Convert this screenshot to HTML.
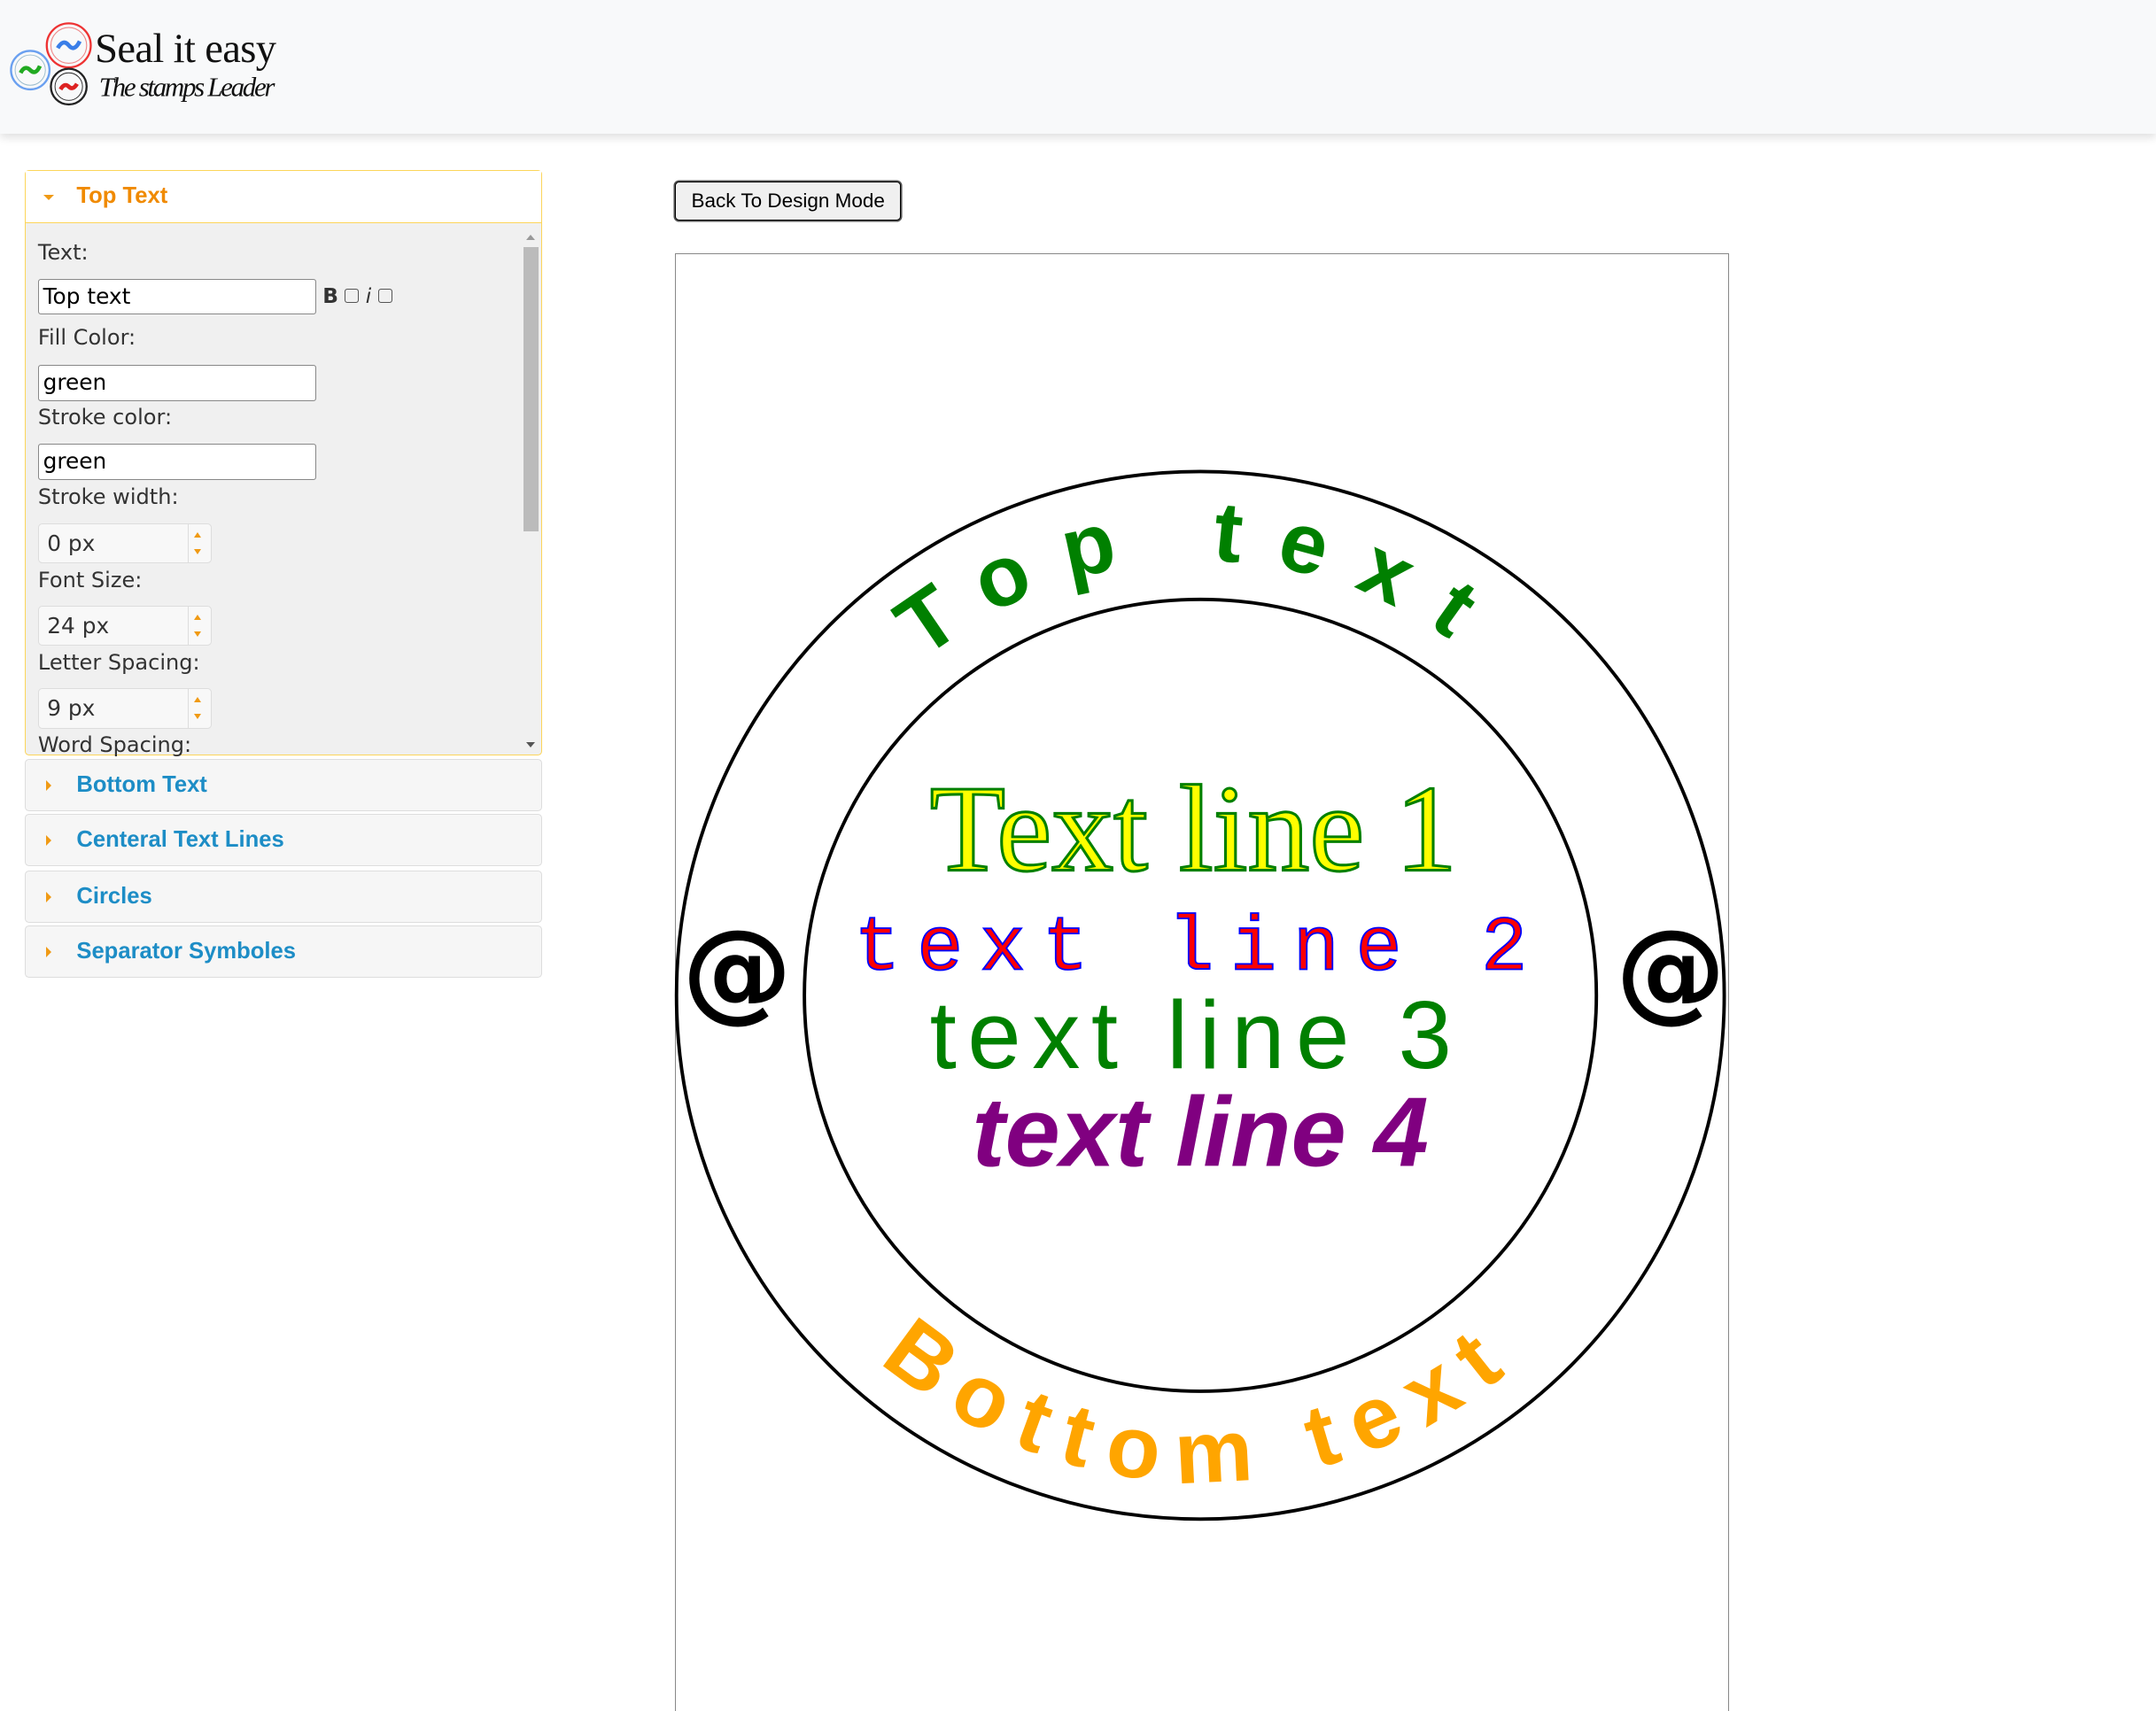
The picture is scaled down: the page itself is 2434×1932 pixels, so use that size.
<!DOCTYPE html>
<html><head><meta charset="utf-8"><style>
html,body{margin:0;padding:0;background:#fff;}
body{zoom:1.55230;width:1568px;height:1235px;overflow:hidden;position:relative;font-family:"DejaVu Sans","Liberation Sans",sans-serif;}
.hdr{position:absolute;left:0;top:0;width:1568px;height:97px;background:#f8f9fa;box-shadow:0 3px 6px rgba(0,0,0,.12);}
.panel{position:absolute;left:18px;width:375px;border:1px solid #ddd;border-radius:3px;background:#f6f6f6;}
.ph{height:37px;line-height:37px;font-size:16.5px;color:#1d8dc6;font-weight:bold;padding-left:37px;position:relative;font-family:"Liberation Sans",sans-serif;}
.ph:before{content:"";position:absolute;left:15px;top:15px;border-left:4px solid #f09a14;border-top:4px solid transparent;border-bottom:4px solid transparent;}
.top{top:124px;height:424px;border-color:#fcd55a;background:#f0f0f0;}
.top .ph{color:#f08a00;background:#fff;border-bottom:1px solid #fcd55a;}
.top .ph:before{left:13px;top:17px;border-top:4px solid #f09a14;border-left:4px solid transparent;border-right:4px solid transparent;border-bottom:0;}
.lbl{position:absolute;left:9px;font-size:15.5px;color:#333;}
.inp{position:absolute;left:9px;width:198px;height:25px;border:1px solid #888;border-radius:2px;background:#fff;font-size:16px;line-height:25px;padding-left:3px;color:#000;}
.spin{position:absolute;left:9px;width:119px;height:28px;border:1px solid #ddd;border-radius:3px;background:#f8f8f8;font-size:16px;line-height:28px;padding-left:6px;color:#333;}
.spin:after{content:"";position:absolute;left:108px;top:0;width:1px;height:28px;background:#ddd;}
.spin i{position:absolute;left:113px;border-left:3px solid transparent;border-right:3px solid transparent;}
.sb{position:absolute;left:362px;top:42px;width:11px;height:382px;background:#f0f0f0;}
.btn{position:absolute;left:491px;top:132px;width:163px;height:27px;border:1px solid #000;border-radius:3px;box-shadow:0 0 0 1px #555;background:#f0f0f0;font-family:"Liberation Sans",sans-serif;font-size:14.5px;text-align:center;line-height:27px;}
.cv{position:absolute;left:491px;top:184px;width:765px;height:1060px;border:1px solid #888;border-bottom:0;}
</style></head><body>
<div class="hdr">
<svg width="210" height="90" style="position:absolute;left:0;top:0">
<circle cx="50" cy="33" r="16" fill="none" stroke="#e33" stroke-width="1.5"/><circle cx="50" cy="33" r="13" fill="none" stroke="#e88" stroke-width=".7"/>
<path d="M42 35 q4 -7 8 -2 t8 -3" stroke="#3a7ee8" stroke-width="3" fill="none"/>
<circle cx="22" cy="51" r="14" fill="none" stroke="#6aa0f0" stroke-width="1.5"/><circle cx="22" cy="51" r="11" fill="none" stroke="#9bc" stroke-width=".6"/>
<path d="M15 53 q3 -6 7 -2 t7 -3" stroke="#2a2" stroke-width="3" fill="none"/>
<circle cx="50" cy="63" r="13" fill="none" stroke="#222" stroke-width="1.5"/><circle cx="50" cy="63" r="10" fill="none" stroke="#222" stroke-width=".6"/>
<path d="M44 65 q3 -5 6 -2 t6 -2" stroke="#d22" stroke-width="3" fill="none"/>
<text x="69" y="45" font-family="Liberation Serif,serif" font-size="30" fill="#111" textLength="132">Seal it easy</text>
<text x="72" y="70" font-family="Liberation Serif,serif" font-style="italic" font-size="20" fill="#111" textLength="128">The stamps Leader</text>
</svg></div>

<div class="panel top"><div class="ph">Top Text</div>
<div class="lbl" style="top:50px">Text:</div>
<div class="inp" style="top:78px">Top text</div>
<div style="position:absolute;left:216px;top:82px;font-size:15px;color:#333"><b>B</b> <span style="display:inline-block;width:9px;height:9px;border:1px solid #555;border-radius:2px"></span> <i>i</i> <span style="display:inline-block;width:9px;height:9px;border:1px solid #555;border-radius:2px"></span></div>
<div class="lbl" style="top:112px">Fill Color:</div>
<div class="inp" style="top:141px">green</div>
<div class="lbl" style="top:170px">Stroke color:</div>
<div class="inp" style="top:198px">green</div>
<div class="lbl" style="top:228px">Stroke width:</div>
<div class="spin" style="top:256px">0 px<i style="top:6px;border-bottom:4px solid #f09a14"></i><i style="top:18px;border-top:4px solid #f09a14"></i></div>
<div class="lbl" style="top:288px">Font Size:</div>
<div class="spin" style="top:316px">24 px<i style="top:6px;border-bottom:4px solid #f09a14"></i><i style="top:18px;border-top:4px solid #f09a14"></i></div>
<div class="lbl" style="top:348px">Letter Spacing:</div>
<div class="spin" style="top:376px">9 px<i style="top:6px;border-bottom:4px solid #f09a14"></i><i style="top:18px;border-top:4px solid #f09a14"></i></div>
<div class="lbl" style="top:408px">Word Spacing:</div>
<div class="sb"><div style="position:absolute;left:0;top:13px;width:11px;height:207px;background:#bbb"></div>
<div style="position:absolute;left:2px;top:4px;border-bottom:4px solid #999;border-left:3.5px solid transparent;border-right:3.5px solid transparent"></div>
<div style="position:absolute;left:2px;top:373px;border-top:4px solid #555;border-left:3.5px solid transparent;border-right:3.5px solid transparent"></div></div>
</div>
<div class="panel" style="top:552px"><div class="ph">Bottom Text</div></div>
<div class="panel" style="top:592px"><div class="ph">Centeral Text Lines</div></div>
<div class="panel" style="top:633px"><div class="ph">Circles</div></div>
<div class="panel" style="top:673px"><div class="ph">Separator Symboles</div></div>

<div class="btn">Back To Design Mode</div>
<div class="cv"></div>
<svg width="1568" height="1235" style="position:absolute;left:0;top:0">
<defs>
<path id="tp" d="M557 724 A316 316 0 0 1 1189 724"/>
<path id="bp" d="M519 724 A354 354 0 0 0 1227 724"/>
</defs>
<circle cx="873" cy="724" r="381" fill="none" stroke="#000" stroke-width="2.5"/>
<circle cx="873" cy="724" r="288" fill="none" stroke="#000" stroke-width="2.5"/>
<text font-family="Liberation Sans,sans-serif" font-weight="bold" font-size="62" fill="green" letter-spacing="25"><textPath href="#tp" startOffset="50%" text-anchor="middle">Top text</textPath></text>
<text font-family="Liberation Sans,sans-serif" font-weight="bold" font-size="64" fill="orange" letter-spacing="14"><textPath href="#bp" startOffset="50%" text-anchor="middle">Bottom text</textPath></text>
<text x="536" y="733" font-family="DejaVu Sans,sans-serif" font-weight="bold" font-size="80" text-anchor="middle">@</text>
<text x="1215" y="733" font-family="DejaVu Sans,sans-serif" font-weight="bold" font-size="80" text-anchor="middle">@</text>
<text x="868" y="633" font-family="Liberation Serif,serif" font-size="90" fill="yellow" stroke="green" stroke-width="2" text-anchor="middle">Text line 1</text>
<text x="872" y="705" font-family="Liberation Mono,monospace" font-size="56" fill="red" stroke="blue" stroke-width="1.2" text-anchor="middle" letter-spacing="12">text line 2</text>
<text x="870" y="777" font-family="Liberation Sans,sans-serif" font-size="70" fill="green" text-anchor="middle" letter-spacing="8">text line 3</text>
<text x="873" y="848" font-family="Liberation Sans,sans-serif" font-weight="bold" font-style="italic" font-size="72" fill="purple" text-anchor="middle">text line 4</text>
</svg>
</body></html>
